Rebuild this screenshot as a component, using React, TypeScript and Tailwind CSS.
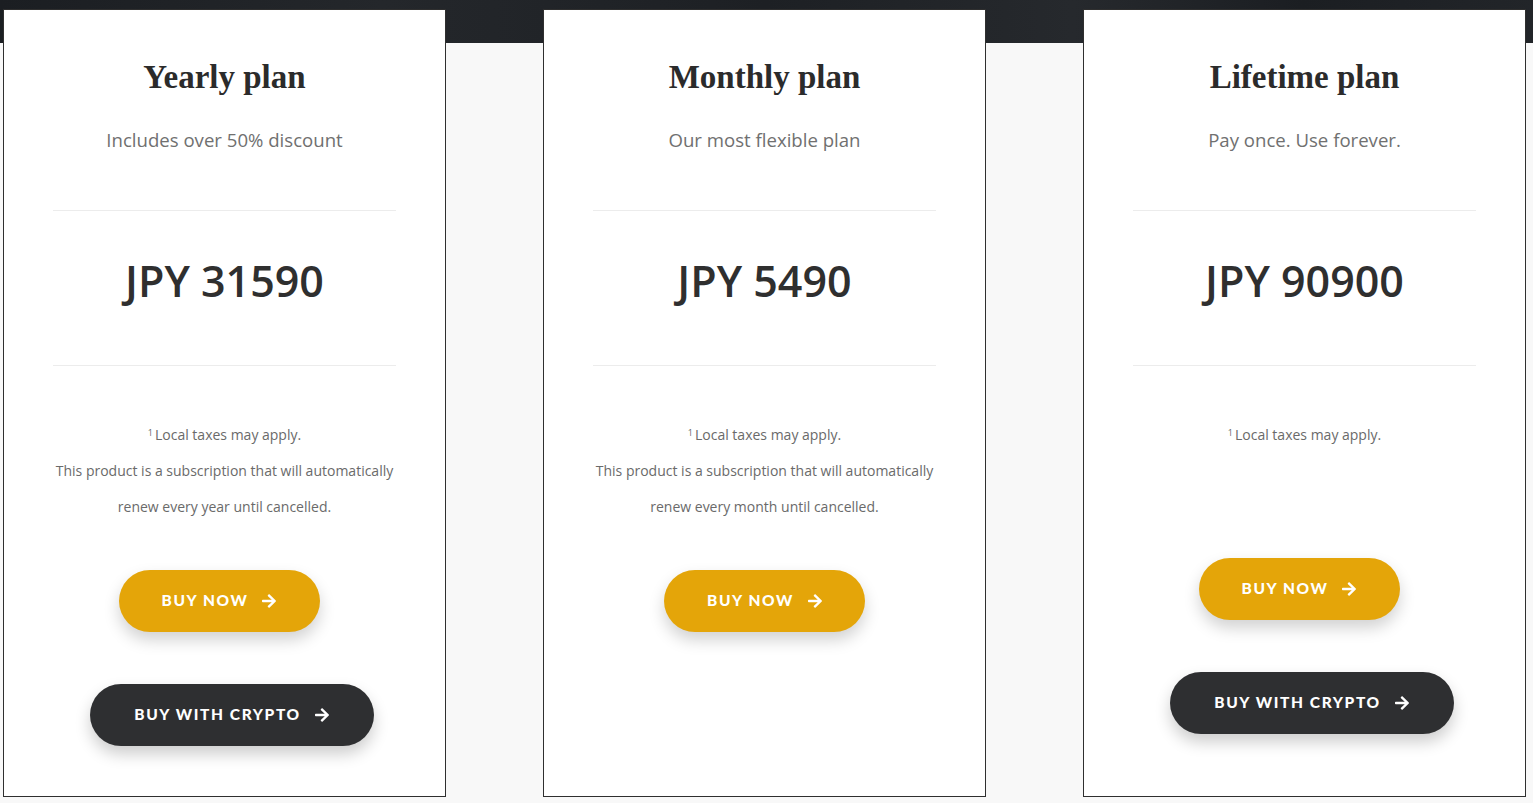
import { FaArrowRight } from 'react-icons/fa';

type Plan = {
  title: string;
  subtitle: string;
  price: string;
  period?: string;
  crypto: boolean;
};

const plans: Plan[] = [
  { title: 'Yearly plan', subtitle: 'Includes over 50% discount', price: 'JPY 31590', period: 'year', crypto: true },
  { title: 'Monthly plan', subtitle: 'Our most flexible plan', price: 'JPY 5490', period: 'month', crypto: false },
  { title: 'Lifetime plan', subtitle: 'Pay once. Use forever.', price: 'JPY 90900', crypto: true },
];

function PlanCard({ plan }: { plan: Plan }) {
  return (
    <div className="w-[443px] h-[788px] shrink-0 bg-white border border-[#2f2f2f] flex flex-col items-center">
      <h2 className="mt-[47px] text-[33px] leading-[40px] font-bold text-[#2b2b2b] font-['Liberation_Serif',serif]">
        {plan.title}
      </h2>
      <p className="mt-[29px] text-[18.6px] leading-[28px] text-[#707070]">{plan.subtitle}</p>
      <div className="w-full px-[49px] mt-[56px]">
        <div className="h-px bg-[#ececec]" />
      </div>
      <div className="mt-[42px] text-[43px] leading-[56px] font-semibold text-[#2f2f2f]">{plan.price}</div>
      <div className="w-full px-[49px] mt-[56px]">
        <div className="h-px bg-[#ececec]" />
      </div>
      <div className={`mt-[51px] text-[14px] leading-[36px] text-[#6a6a6a] text-center ${plan.period ? '' : 'min-h-[96px]'}`}>
        <p>
          <sup className="text-[9px] mr-[2px]">1</sup>Local taxes may apply.
        </p>
        {plan.period && (
          <p>
            This product is a subscription that will automatically
            <br />
            renew every {plan.period} until cancelled.
          </p>
        )}
      </div>
      <button
        className={`mt-[45px] ${plan.crypto ? 'mr-[11px]' : ''} w-[201px] h-[62px] rounded-full bg-[#e4a509] text-white shadow-[0_8px_16px_rgba(0,0,0,0.18)] flex items-center justify-center gap-[14px] font-['Lato',sans-serif] font-black text-[15.5px] tracking-[1.6px]`}
      >
        BUY NOW
        <FaArrowRight className="w-[14px] h-[16px]" />
      </button>
      {plan.crypto && (
        <button className="mt-[52px] ml-[14px] w-[284px] h-[62px] rounded-full bg-[#2e2f31] text-white shadow-[0_8px_16px_rgba(0,0,0,0.2)] flex items-center justify-center gap-[14px] font-['Lato',sans-serif] font-black text-[15.5px] tracking-[1.6px]">
          BUY WITH CRYPTO
          <FaArrowRight className="w-[14px] h-[16px]" />
        </button>
      )}
    </div>
  );
}

export default function App() {
  return (
    <div className="w-[1533px] h-[803px] overflow-hidden bg-[#f8f8f8] font-['Open_Sans',sans-serif]">
      <div className="h-[43px] bg-[linear-gradient(90deg,#1b1e22,#24272b_25%,#1d2024_50%,#26292d_70%,#1b1e22_85%,#222529)]" />
      <div className="-mt-[34px] pl-[3px] flex gap-[97px]">
        {plans.map((p) => (
          <PlanCard key={p.title} plan={p} />
        ))}
      </div>
    </div>
  );
}
